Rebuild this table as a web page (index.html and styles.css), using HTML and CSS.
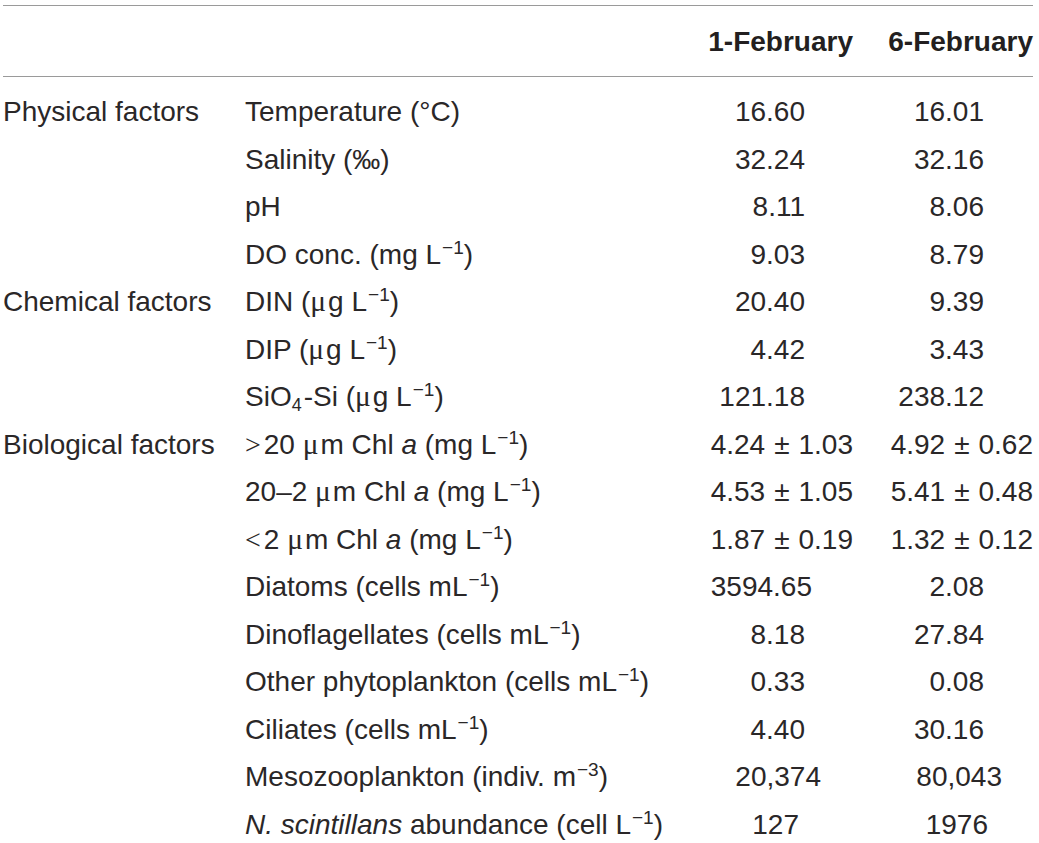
FILE: index.html
```html
<!DOCTYPE html>
<html lang="en">
<head>
<meta charset="utf-8">
<title>Environmental factors</title>
<link rel="stylesheet" href="styles.css">
</head>
<body>
<div class="wrap">
<table class="data">
  <colgroup>
    <col class="c-group">
    <col class="c-name">
    <col class="c-v1">
    <col class="c-v2">
  </colgroup>
  <thead>
    <tr>
      <th></th>
      <th></th>
      <th class="num">1-February</th>
      <th class="num">6-February</th>
    </tr>
  </thead>
  <tbody>
    <tr class="first">
      <td>Physical factors</td>
      <td>Temperature (°C)</td>
      <td class="num v1">16.60</td>
      <td class="num v2">16.01</td>
    </tr>
    <tr>
      <td></td>
      <td>Salinity (‰)</td>
      <td class="num v1">32.24</td>
      <td class="num v2">32.16</td>
    </tr>
    <tr>
      <td></td>
      <td>pH</td>
      <td class="num v1">8.11</td>
      <td class="num v2">8.06</td>
    </tr>
    <tr>
      <td></td>
      <td>DO conc. (mg L<sup>−1</sup>)</td>
      <td class="num v1">9.03</td>
      <td class="num v2">8.79</td>
    </tr>
    <tr>
      <td>Chemical factors</td>
      <td>DIN (<span class="mu">μ</span>g L<sup>−1</sup>)</td>
      <td class="num v1">20.40</td>
      <td class="num v2">9.39</td>
    </tr>
    <tr>
      <td></td>
      <td>DIP (<span class="mu">μ</span>g L<sup>−1</sup>)</td>
      <td class="num v1">4.42</td>
      <td class="num v2">3.43</td>
    </tr>
    <tr>
      <td></td>
      <td>SiO<sub>4</sub>-Si (<span class="mu">μ</span>g L<sup>−1</sup>)</td>
      <td class="num v1">121.18</td>
      <td class="num v2">238.12</td>
    </tr>
    <tr>
      <td>Biological factors</td>
      <td><span class="op">&gt;</span>20 <span class="mu">μ</span>m Chl <i>a</i> (mg L<sup>−1</sup>)</td>
      <td class="num">4.24<span class="pm">±</span>1.03</td>
      <td class="num">4.92<span class="pm">±</span>0.62</td>
    </tr>
    <tr>
      <td></td>
      <td>20–2 <span class="mu">μ</span>m Chl <i>a</i> (mg L<sup>−1</sup>)</td>
      <td class="num">4.53<span class="pm">±</span>1.05</td>
      <td class="num">5.41<span class="pm">±</span>0.48</td>
    </tr>
    <tr>
      <td></td>
      <td><span class="op">&lt;</span>2 <span class="mu">μ</span>m Chl <i>a</i> (mg L<sup>−1</sup>)</td>
      <td class="num">1.87<span class="pm">±</span>0.19</td>
      <td class="num">1.32<span class="pm">±</span>0.12</td>
    </tr>
    <tr>
      <td></td>
      <td>Diatoms (cells mL<sup>−1</sup>)</td>
      <td class="num v1 p41">3594.65</td>
      <td class="num v2">2.08</td>
    </tr>
    <tr>
      <td></td>
      <td>Dinoflagellates (cells mL<sup>−1</sup>)</td>
      <td class="num v1">8.18</td>
      <td class="num v2">27.84</td>
    </tr>
    <tr>
      <td></td>
      <td>Other phytoplankton (cells mL<sup>−1</sup>)</td>
      <td class="num v1">0.33</td>
      <td class="num v2">0.08</td>
    </tr>
    <tr>
      <td></td>
      <td>Ciliates (cells mL<sup>−1</sup>)</td>
      <td class="num v1">4.40</td>
      <td class="num v2">30.16</td>
    </tr>
    <tr>
      <td></td>
      <td>Mesozooplankton (indiv. m<sup>−3</sup>)</td>
      <td class="num v1 p32">20,374</td>
      <td class="num v2 p31">80,043</td>
    </tr>
    <tr>
      <td></td>
      <td><i>N. scintillans</i> abundance (cell L<sup>−1</sup>)</td>
      <td class="num v1 p54">127</td>
      <td class="num v2 p45">1976</td>
    </tr>
  </tbody>
</table>
</div>
</body>
</html>
```

FILE: styles.css
```css
html, body {
  margin: 0;
  padding: 0;
  background: #ffffff;
}

.wrap {
  padding: 5px 6px 0 3px;
}

.data {
  width: 1030px;
  table-layout: fixed;
  border-collapse: collapse;
  font-family: "Liberation Sans", Arial, Helvetica, sans-serif;
  font-size: 28px;
  color: #2a2728;
  border-top: 1px solid #9a9a9a;
}

.c-group { width: 242px; }
.c-name { width: 455px; }
.c-v1 { width: 153px; }
.c-v2 { width: 180px; }

.data th {
  font-weight: bold;
  color: #231f20;
  line-height: 32px;
  padding: 20px 0 18px 0;
  border-bottom: 1px solid #9a9a9a;
  text-align: left;
  white-space: nowrap;
}

.data td {
  line-height: 47.5px;
  height: 47.5px;
  padding: 0;
  text-align: left;
  white-space: nowrap;
  vertical-align: top;
}

.data tr.first td {
  padding-top: 11px;
}

.data .num {
  text-align: right;
}

.data td.v1 { padding-right: 48px; }
.data td.v2 { padding-right: 49px; }
.data td.p41 { padding-right: 41px; }
.data td.p32 { padding-right: 32px; }
.data td.p54 { padding-right: 54px; }
.data td.p31 { padding-right: 31px; }
.data td.p45 { padding-right: 45px; }

.data sup {
  font-size: 0.68em;
  line-height: 0;
  vertical-align: 10px;
  margin-left: 1px;
}

.data sub {
  font-size: 0.64em;
  line-height: 0;
  vertical-align: -5px;
  margin-right: 2px;
}

.pm {
  margin: 0 9px;
}

.mu {
  font-family: "Liberation Serif", "Times New Roman", serif;
  font-size: 1.05em;
  margin-right: 2px;
}

.op {
  font-family: "Liberation Serif", "Times New Roman", serif;
  margin-right: 3px;
}
```
